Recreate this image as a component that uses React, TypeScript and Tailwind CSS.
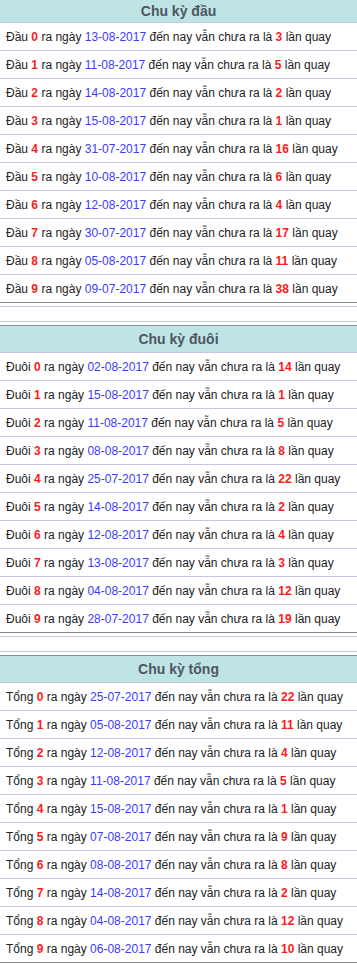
import React from 'react';

type Row = { n: number; date: string; count: number };

const dau: Row[] = [
  { n: 0, date: '13-08-2017', count: 3 },
  { n: 1, date: '11-08-2017', count: 5 },
  { n: 2, date: '14-08-2017', count: 2 },
  { n: 3, date: '15-08-2017', count: 1 },
  { n: 4, date: '31-07-2017', count: 16 },
  { n: 5, date: '10-08-2017', count: 6 },
  { n: 6, date: '12-08-2017', count: 4 },
  { n: 7, date: '30-07-2017', count: 17 },
  { n: 8, date: '05-08-2017', count: 11 },
  { n: 9, date: '09-07-2017', count: 38 },
];

const duoi: Row[] = [
  { n: 0, date: '02-08-2017', count: 14 },
  { n: 1, date: '15-08-2017', count: 1 },
  { n: 2, date: '11-08-2017', count: 5 },
  { n: 3, date: '08-08-2017', count: 8 },
  { n: 4, date: '25-07-2017', count: 22 },
  { n: 5, date: '14-08-2017', count: 2 },
  { n: 6, date: '12-08-2017', count: 4 },
  { n: 7, date: '13-08-2017', count: 3 },
  { n: 8, date: '04-08-2017', count: 12 },
  { n: 9, date: '28-07-2017', count: 19 },
];

const tong: Row[] = [
  { n: 0, date: '25-07-2017', count: 22 },
  { n: 1, date: '05-08-2017', count: 11 },
  { n: 2, date: '12-08-2017', count: 4 },
  { n: 3, date: '11-08-2017', count: 5 },
  { n: 4, date: '15-08-2017', count: 1 },
  { n: 5, date: '07-08-2017', count: 9 },
  { n: 6, date: '08-08-2017', count: 8 },
  { n: 7, date: '14-08-2017', count: 2 },
  { n: 8, date: '04-08-2017', count: 12 },
  { n: 9, date: '06-08-2017', count: 10 },
];

// one cycle table: header + 10 rows
const Cycle = ({ title, label, rows, first }: { title: string; label: string; rows: Row[]; first?: boolean }) => (
  <div>
    {!first && (
      <>
        <div className="mt-[3px] h-[16px] border-y border-[#c3c9e2]" />
        <div className="mt-[3px] border-t border-[#8a8f9c]" />
      </>
    )}
    <div
      className={`${first ? 'h-[23px]' : 'h-[27px]'} flex items-center justify-center bg-[#bee5e4] border-b border-[#c3c9e2] text-[14px] font-bold text-[#4f5563]`}
    >
      {title}
    </div>
    {rows.map((r, i) => (
      <div
        key={r.n}
        className={`h-[28px] flex items-center pl-[6px] text-[12px] text-[#222] whitespace-nowrap border-b ${
          i === rows.length - 1 ? 'border-[#80858f]' : 'border-[#c3c9e2]'
        }`}
      >
        <span>
          {label} <span className="text-[#ff1a1a] font-bold">{r.n}</span> ra ngày{' '}
          <span className="text-[#3b3bff]">{r.date}</span> đến nay vẫn chưa ra là{' '}
          <span className="text-[#ff1a1a] font-bold">{r.count}</span> lần quay
        </span>
      </div>
    ))}
  </div>
);

export default function App() {
  return (
    <div className="w-[357px] h-[964px] overflow-hidden bg-white font-['Liberation_Sans',Arial,sans-serif]">
      <Cycle title="Chu kỳ đầu" label="Đầu" rows={dau} first />
      <Cycle title="Chu kỳ đuôi" label="Đuôi" rows={duoi} />
      <Cycle title="Chu kỳ tổng" label="Tổng" rows={tong} />
    </div>
  );
}
